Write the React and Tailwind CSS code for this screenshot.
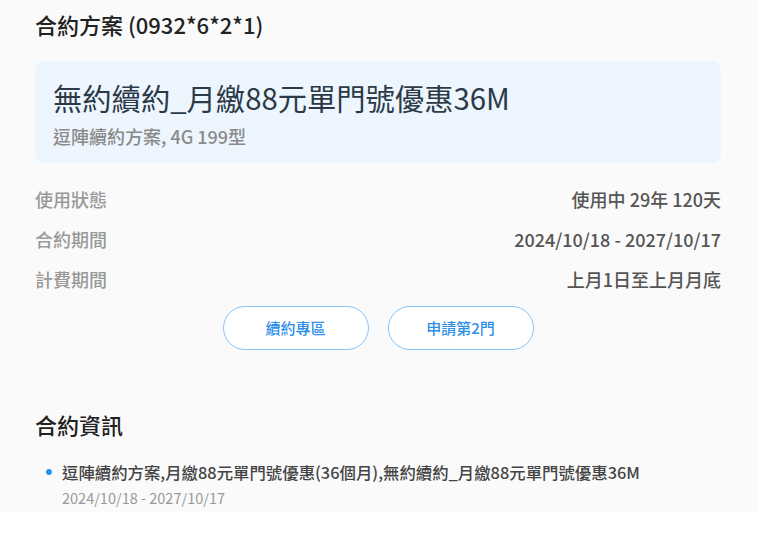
import React from 'react';

const font = { fontFamily: '"Noto Sans CJK TC", "Noto Sans", sans-serif' };

// 合約基本資料
const rows = [
  { label: '使用狀態', value: '使用中 29年 120天' },
  { label: '合約期間', value: '2024/10/18 - 2027/10/17' },
  { label: '計費期間', value: '上月1日至上月月底' },
];

export default function App() {
  return (
    <div className="w-[780px] h-[535px] bg-white" style={font}>
      <div className="w-[758px] h-[512px] overflow-hidden bg-[#fafafa] px-[35px] pt-[9px]">
        <h2 className="text-[22px] leading-[30px] font-medium text-[#222]">合約方案 (0932*6*2*1)</h2>

        <div className="mt-[22px] w-[686px] h-[102px] rounded-lg bg-[#edf6fe] px-[18px] pt-[16px]">
          <div className="text-[29.3px] leading-[40px] text-[#2c3a47]">無約續約_月繳88元單門號優惠36M</div>
          <div className="mt-[6px] text-[18px] leading-[26px] font-medium text-[#8a8a8a]">逗陣續約方案, 4G 199型</div>
        </div>

        <div className="mt-[16px] w-[686px]">
          {rows.map(row => (
            <div key={row.label} className="flex items-center justify-between h-[40px] text-[18px] font-medium">
              <span className="text-[#999]">{row.label}</span>
              <span className="text-[#555]">{row.value}</span>
            </div>
          ))}
        </div>

        <div className="mt-[7px] w-[686px] flex justify-center gap-[19px]">
          <button className="w-[146px] h-[44px] rounded-full border border-[#86c3f7] bg-white text-[15px] font-medium text-[#2f8fe8]">
            續約專區
          </button>
          <button className="w-[146px] h-[44px] rounded-full border border-[#86c3f7] bg-white text-[15px] font-medium text-[#2f8fe8]">
            申請第2門
          </button>
        </div>

        <h2 className="mt-[59px] text-[22px] leading-[30px] font-medium text-[#222]">合約資訊</h2>

        <div className="mt-[21px] pl-[11px]">
          <div className="flex items-center gap-[10px]">
            <span className="w-[6px] h-[6px] rounded-full bg-[#2196f3]" />
            <span className="text-[16.4px] leading-[24px] font-medium text-[#444]">
              逗陣續約方案,月繳88元單門號優惠(36個月),無約續約_月繳88元單門號優惠36M
            </span>
          </div>
          <div className="mt-[4px] pl-[16px] text-[14.5px] leading-[20px] text-[#999]">2024/10/18 - 2027/10/17</div>
        </div>
      </div>
    </div>
  );
}
